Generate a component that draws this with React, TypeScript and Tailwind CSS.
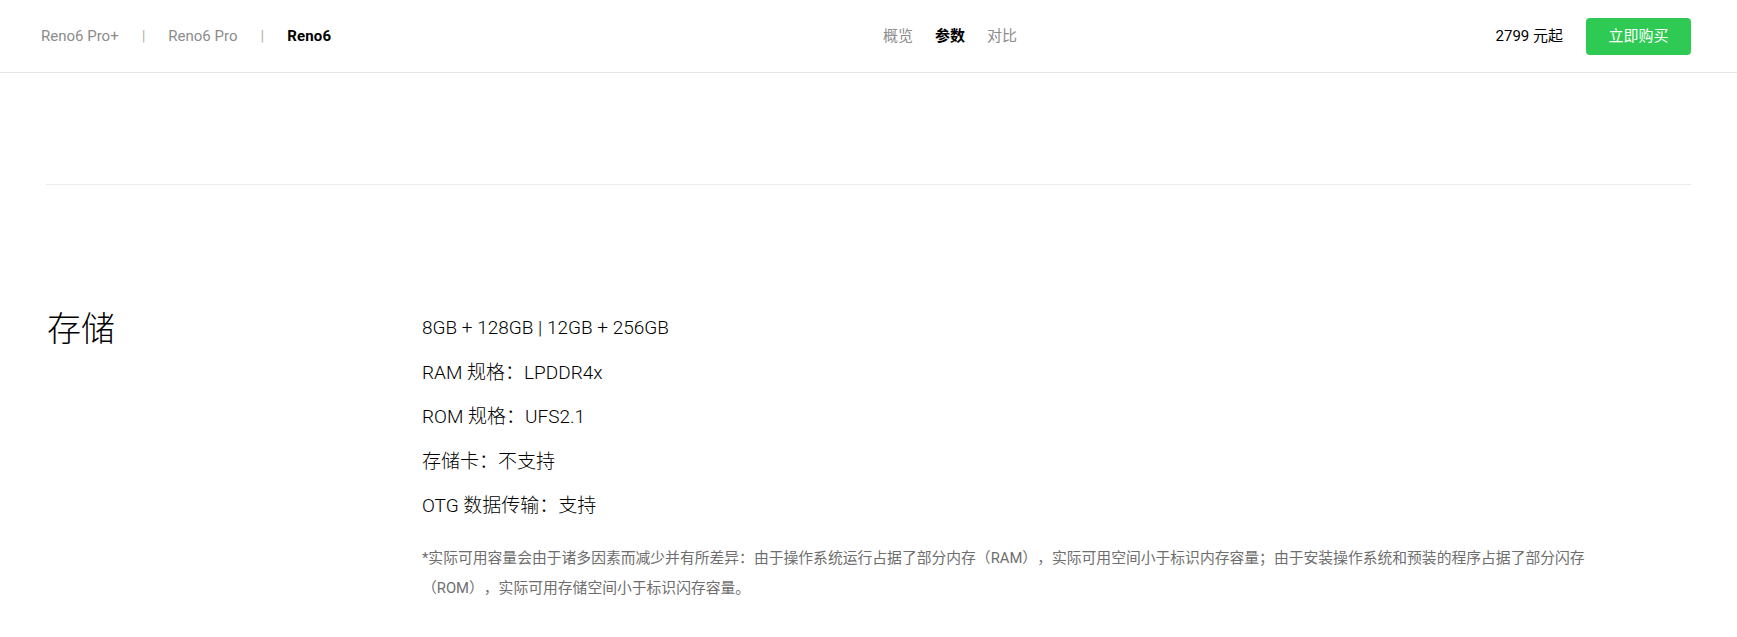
const font = {
  fontFamily: 'Roboto, "Noto Sans CJK SC", sans-serif',
};

const models = ["Reno6 Pro+", "Reno6 Pro", "Reno6"];
const tabs = ["概览", "参数", "对比"];

const specs = [
  "8GB + 128GB | 12GB + 256GB",
  "RAM 规格：LPDDR4x",
  "ROM 规格：UFS2.1",
  "存储卡：不支持",
  "OTG 数据传输：支持",
];

function Header() {
  return (
    <header className="flex h-[73px] items-center border-b border-[#e6e6e6] bg-white pl-[41px] pr-[46px]">
      <div className="flex w-[842px] items-center text-[15px]">
        {models.map((m, i) => (
          <div key={m} className="flex items-center">
            {i > 0 && <span className="mx-[23px] text-[#b3b3b3]">|</span>}
            <span
              className={
                i === models.length - 1
                  ? "font-bold tracking-[0.2px] text-black"
                  : "text-[#8c8c8c]"
              }
            >
              {m}
            </span>
          </div>
        ))}
      </div>
      <nav className="flex items-center gap-[22px] text-[15px]">
        {tabs.map((t) => (
          <span
            key={t}
            className={t === "参数" ? "font-bold text-black" : "text-[#8c8c8c]"}
          >
            {t}
          </span>
        ))}
      </nav>
      <div className="ml-auto flex items-center gap-[23px]">
        <span className="text-[15px] text-black">2799 元起</span>
        <button className="flex h-[37px] w-[105px] items-center justify-center rounded-[4px] bg-[#2fca53] text-[15px] text-white">
          立即购买
        </button>
      </div>
    </header>
  );
}

export default function App() {
  return (
    <div className="min-h-screen bg-white text-black" style={font}>
      <Header />
      <main className="mx-[46px]">
        <div className="mt-[111px] border-t border-[#ebebeb]" />
        <section className="mt-[121px] flex">
          <h2 className="w-[376px] shrink-0 pl-[1px] text-[34px] leading-[46px] font-light">
            存储
          </h2>
          <div className="flex-1 pr-[80px]">
            {specs.map((s) => (
              <p key={s} className="text-[19px] leading-[44.5px] font-light">
                {s}
              </p>
            ))}
            <p className="mt-[14px] text-[14.8px] leading-[30px] text-[#6e6e6e] [text-spacing-trim:space-all]">
              *实际可用容量会由于诸多因素而减少并有所差异：由于操作系统运行占据了部分内存（RAM），实际可用空间小于标识内存容量；由于安装操作系统和预装的程序占据了部分闪存（ROM），实际可用存储空间小于标识闪存容量。
            </p>
          </div>
        </section>
      </main>
    </div>
  );
}
